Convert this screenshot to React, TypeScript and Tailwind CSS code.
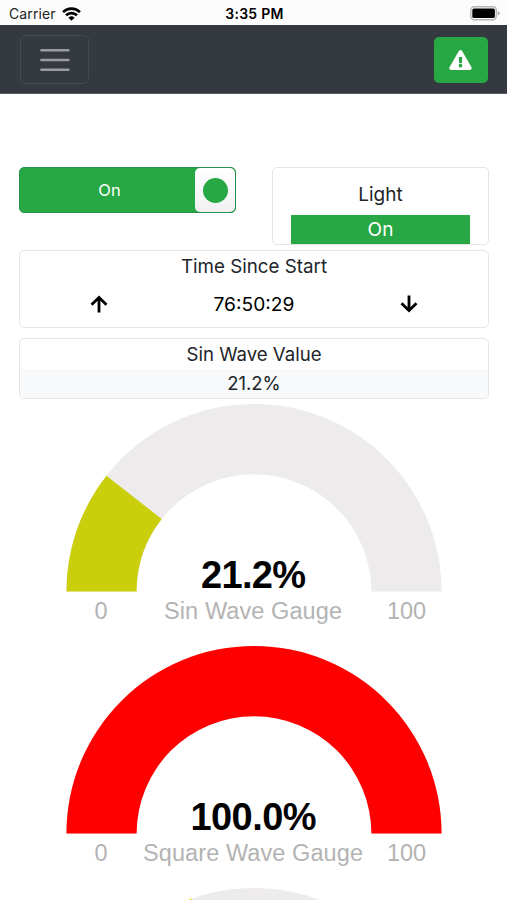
import { FaExclamationTriangle } from "react-icons/fa";

const R = 187.6;
const INNER = 117.4;
const CX = 188;
const CY = 187.6;

function sector(from: number, to: number) {
  const a = Math.PI * (1 - from);
  const b = Math.PI * (1 - to);
  const p = (r: number, t: number) => `${CX + r * Math.cos(t)} ${CY - r * Math.sin(t)}`;
  return `M${p(INNER, a)}L${p(R, a)}A${R} ${R} 0 0 1 ${p(R, b)}L${p(INNER, b)}A${INNER} ${INNER} 0 0 0 ${p(INNER, a)}Z`;
}

type GaugeProps = {
  value: number;
  color: string;
  label?: string;
  valueWidth?: number;
  labelWidth?: number;
};

function Gauge({ value, color, label, valueWidth, labelWidth }: GaugeProps) {
  return (
    <svg
      width="376"
      height="242"
      viewBox="0 0 376 242"
      className="block shrink-0 font-['Liberation_Sans',Arial,sans-serif]"
      textAnchor="middle"
    >
      <path d={sector(0, 1)} fill="#edebeb" />
      <path d={sector(0, value / 100)} fill={color} />
      {label && (
        <>
          <text x="187.5" y="184" fontSize="38" fontWeight="700" fill="#010101" textLength={valueWidth}>
            {value.toFixed(1)}%
          </text>
          <g fontSize="23.5" fill="#b3b3b3">
            <text x="35" y="214.6">0</text>
            <text x="187" y="214.6" textLength={labelWidth}>{label}</text>
            <text x="340.5" y="214.6">100</text>
          </g>
        </>
      )}
    </svg>
  );
}

function Arrow({ down = false }: { down?: boolean }) {
  return (
    <svg
      width="18"
      height="18"
      viewBox="0 0 18 18"
      fill="none"
      stroke="#000"
      strokeWidth="2.8"
      className={down ? "mr-[2px] mb-[2px] rotate-180" : "ml-[2px] mb-[2px]"}
    >
      <path d="M9 17.5V2.5M1.5 9.8 9 2.4l7.5 7.4" />
    </svg>
  );
}

export default function App() {
  return (
    <div className="flex h-[900px] w-full flex-col overflow-hidden bg-white font-[Inter,sans-serif] text-[#212529]">
      <div className="grid h-[25px] shrink-0 grid-cols-3 items-center bg-[#fcfcfc] pt-[2px] pr-[7px] pl-[9px] text-black">
        <div className="flex items-center gap-[6px]">
          <span className="text-[14px] tracking-[0.1px] text-[#222]">Carrier</span>
          <svg width="19" height="14" viewBox="0 0 19 14" fill="none" stroke="#000" strokeWidth="2.6">
            <path d="M1 5.1a12.2 12.2 0 0 1 17 0M4 8.3a8 8 0 0 1 11 0" />
            <path d="M6.4 10.7a4.5 4.5 0 0 1 6.2 0L9.5 13.8Z" fill="#000" stroke="none" />
          </svg>
        </div>
        <span className="text-center text-[14px] font-semibold tracking-[0.25px] whitespace-nowrap">3:35 PM</span>
        <svg width="30" height="15" viewBox="0 0 30 15" className="justify-self-end">
          <rect x=".8" y=".8" width="25.5" height="12.9" rx="3.5" fill="#fff" stroke="#b5b5b5" strokeWidth="1.4" />
          <rect x="2.3" y="2.4" width="22.6" height="9.7" rx="1.6" />
          <path d="M27.7 5v4.6q2-1 2-2.3t-2-2.3Z" fill="#aaa" />
        </svg>
      </div>

      <nav className="flex h-[69px] shrink-0 items-center justify-between border-b border-[#5a5f64] bg-[#343a40] pt-px pr-[19px] pl-5">
        <button className="flex h-[49px] w-[69px] items-center justify-center rounded-[5px] border border-[#454a50]">
          <svg width="30" height="24" viewBox="0 0 30 24" stroke="#9a9da0" strokeWidth="2.4" strokeLinecap="round">
            <path d="M1.3 2.2h27.2M1.3 12h27.2M1.3 21.8h27.2" />
          </svg>
        </button>
        <button className="flex h-[46px] w-[54px] items-center justify-center rounded-[5px] bg-[#28a745] pr-px text-white">
          <FaExclamationTriangle className="h-[20px] w-[23px]" />
        </button>
      </nav>

      <main className="flex flex-col pt-[73px] pr-[18px] pl-[19px]">
        <div className="flex h-[78px] items-start justify-between">
          <button className="flex h-[46px] w-[217px] overflow-hidden rounded-[5px] border border-[#28904a] bg-[#28a745]">
            <span className="flex h-full flex-1 items-center justify-center pl-[4px] text-[16.5px] text-white">On</span>
            <span className="flex h-full w-[40px] items-center justify-center rounded-[5px] bg-linear-to-b from-white to-[#f1f1f1]">
              <span className="size-[25px] rounded-full bg-[#28a745]" />
            </span>
          </button>
          <section className="flex h-[78px] w-[217px] flex-col rounded-[5px] border border-[#e3e5e7] px-[18px] text-center">
            <h2 className="flex h-[47px] items-center justify-center pt-[7px] text-[19px]">Light</h2>
            <div className="flex h-[29px] items-center justify-center bg-[#28a745] pt-[2px] text-[19px] text-white">On</div>
          </section>
        </div>

        <section className="mt-[5px] h-[78px] rounded-[5px] border border-[#e3e5e7]">
          <h2 className="flex h-[32px] items-center justify-center pt-px text-[18.75px]">Time Since Start</h2>
          <div className="grid h-[43px] grid-cols-3 items-center justify-items-center">
            <Arrow />
            <span className="text-[19.2px] text-black">76:50:29</span>
            <Arrow down />
          </div>
        </section>

        <section className="mt-[10px] h-[61px] overflow-hidden rounded-[5px] border border-[#e3e5e7]">
          <h2 className="flex h-[30px] items-center justify-center pt-[2px] text-[18.6px]">Sin Wave Value</h2>
          <div className="flex h-[29px] items-center justify-center bg-[#f8f9fa] pt-px text-[18.5px]">21.2%</div>
        </section>

        <div className="mt-[5px] flex flex-col items-center pr-px">
          <Gauge value={21.2} color="#cace0b" label="Sin Wave Gauge" valueWidth={105} labelWidth={178} />
          <Gauge value={100} color="#ff0000" label="Square Wave Gauge" valueWidth={126} labelWidth={220} />
          <Gauge value={39.2} color="#efe000" />
        </div>
      </main>
    </div>
  );
}
